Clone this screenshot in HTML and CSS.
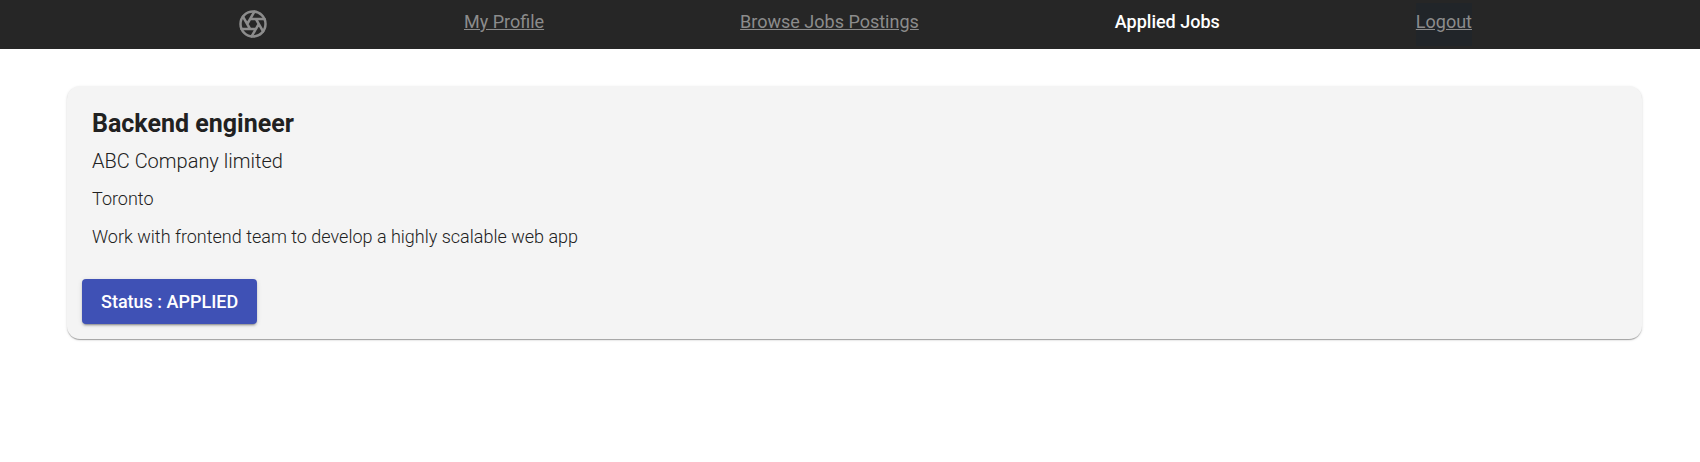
FILE: index.html
```
<!DOCTYPE html>
<html lang="en">
<head>
<meta charset="utf-8">
<meta name="viewport" content="width=device-width, initial-scale=1">
<title>Applied Jobs</title>
<link rel="stylesheet" href="styles.css">
</head>
<body>
<nav class="navbar">
  <a class="nav-logo" href="#" aria-label="Home">
    <svg class="logo" viewBox="0 0 24 24" fill="none" stroke="currentColor" stroke-width="2" stroke-linecap="round" aria-hidden="true"><circle cx="12" cy="12" r="10"/><path d="M14.31 8l5.74 9.94M9.69 8h11.48M7.38 12l5.74-9.94M9.69 16L3.95 6.06M14.31 16H2.83M16.62 12l-5.74 9.94"/></svg>
  </a>
  <a class="nav-link" href="#">My Profile</a>
  <a class="nav-link" href="#">Browse Jobs Postings</a>
  <a class="nav-link active" href="#" aria-current="page">Applied Jobs</a>
  <a class="nav-link logout" href="#">Logout</a>
</nav>
<main class="jobs">
  <article class="card">
    <div class="details">
      <h2 class="title">Backend engineer</h2>
      <p class="company">ABC Company limited</p>
      <p class="text">Toronto</p>
      <p class="text">Work with frontend team to develop a highly scalable web app</p>
    </div>
    <button class="status" type="button">Status : APPLIED</button>
  </article>
</main>
</body>
</html>
```
FILE: styles.css
```
* { box-sizing: border-box; }

body {
  margin: 0;
  background: #fff;
  color: #212121;
  font-family: Roboto, "Liberation Sans", sans-serif;
  font-size: 18px;
}

.navbar {
  display: flex;
  justify-content: space-around;
  align-items: flex-start;
  padding: 3px 130px 3px 140px;
  background: #262626;
}

.nav-logo {
  display: flex;
  padding: 6px 0;
  color: #8c8c8c;
}

.logo {
  width: 30px;
  height: 30px;
}

.nav-link {
  padding: 7px 0 12px;
  line-height: 24px;
  color: #8c8c8c;
  text-decoration: underline;
}

.nav-link.active {
  color: #fff;
  font-weight: 500;
  text-decoration: none;
}

.nav-link.logout { background: #212529; }

.jobs { padding: 37px 58px 24px 67px; }

.card {
  padding: 24px 15px 15px;
  border-radius: 13px;
  background: #f4f4f4;
  box-shadow: 0 2px 1px -1px rgba(0, 0, 0, 0.2), 0 1px 1px rgba(0, 0, 0, 0.14), 0 1px 3px rgba(0, 0, 0, 0.12);
}

.details { padding: 0 10px; }

.title {
  margin: 0 0 9px;
  font-size: 25px;
  font-weight: 700;
  line-height: 28px;
}

.company {
  margin: 0 0 10px;
  font-size: 20px;
  font-weight: 300;
  line-height: 28px;
}

.text {
  margin: 0 0 10px;
  font-weight: 300;
  line-height: 28px;
}

.status {
  display: block;
  margin-top: 28px;
  padding: 0 19px;
  border: 0;
  border-radius: 4px;
  background: #3f51b5;
  color: #fff;
  font: 500 18px/45px Roboto, "Liberation Sans", sans-serif;
  box-shadow: 0 3px 1px -2px rgba(0, 0, 0, 0.2), 0 2px 2px rgba(0, 0, 0, 0.14), 0 1px 5px rgba(0, 0, 0, 0.12);
}
```
